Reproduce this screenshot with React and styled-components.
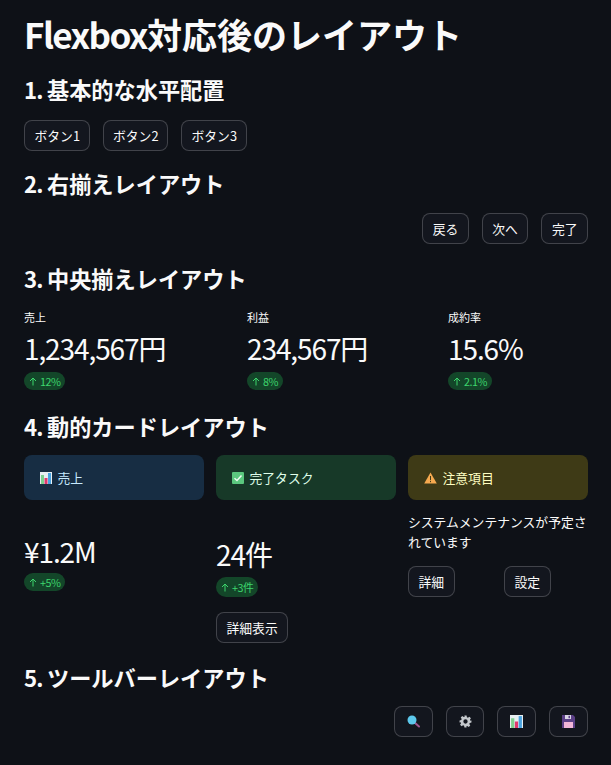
import React from "react";
import styled, { createGlobalStyle } from "styled-components";

const GlobalStyle = createGlobalStyle`
  html, body {
    margin: 0;
    padding: 0;
    background: #0e1117;
  }
  body {
    font-family: "Noto Sans CJK JP", "Noto Sans", sans-serif;
    color: #fafafa;
  }
`;

const Page = styled.div`
  width: 564px;
  height: 765px;
  padding: 0 23px 0 24px;
  overflow: hidden;
`;

const Title = styled.h1`
  margin: 0;
  padding-top: 11px;
  font-size: 35px;
  line-height: 45px;
  font-weight: 700;
`;

// latin glyphs run a bit wider than in the original font
const Latin = styled.span`
  letter-spacing: ${(p) => p.$spacing}px;
`;

const Heading = styled.h2`
  margin: ${(p) => p.$top}px 0 0;
  font-size: 22.2px;
  line-height: 30px;
  font-weight: 700;
`;

const ButtonRow = styled.div`
  display: flex;
  gap: 13px;
  margin-top: ${(p) => p.$top || 14}px;
  justify-content: ${(p) => (p.$end ? "flex-end" : "flex-start")};
`;

const Button = styled.button`
  box-sizing: border-box;
  height: 31px;
  padding: 0 ${(p) => p.$pad ?? 9.5}px;
  border: 1px solid rgba(250, 250, 250, 0.2);
  border-radius: 8px;
  background: #13161e;
  color: #fafafa;
  font-family: inherit;
  font-size: 12.8px;
  line-height: 29px;
  display: inline-flex;
  align-items: center;
  justify-content: center;
`;

const Metrics = styled.div`
  display: grid;
  grid-template-columns: 223px 201px 1fr;
  margin-top: 16px;
`;

const MetricLabel = styled.div`
  font-size: 11px;
  line-height: 16px;
  color: #fafafa;
`;

const MetricValue = styled.div`
  font-size: 28px;
  line-height: 42px;
  letter-spacing: -1.1px;
  margin-top: ${(p) => p.$top || 2}px;
`;

const Delta = styled.span`
  display: inline-flex;
  align-items: center;
  gap: 3px;
  height: ${(p) => (p.$tall ? 20 : 18)}px;
  margin-top: ${(p) => p.$top ?? 3}px;
  padding: 0 5px;
  border-radius: 10px;
  background: rgba(33, 195, 84, 0.3);
  color: #3dd56d;
  font-size: 10.8px;
  letter-spacing: -0.5px;
  line-height: 18px;
`;

const Cards = styled.div`
  display: grid;
  grid-template-columns: repeat(3, 180px);
  gap: 12px;
  margin-top: 14px;
`;

const Column = styled.div`
  display: flex;
  flex-direction: column;
  align-items: flex-start;
`;

const tones = {
  blue: { bg: "#172d43", fg: "#c7ebff" },
  green: { bg: "#173928", fg: "#dffde9" },
  yellow: { bg: "#3e3a16", fg: "#ffffc2" },
};

const Notice = styled.div`
  box-sizing: border-box;
  width: 100%;
  height: 45px;
  padding: 0 16px;
  border-radius: 8px;
  display: flex;
  align-items: center;
  gap: 5.5px;
  font-size: 12.8px;
  background: ${(p) => tones[p.$tone].bg};
  color: ${(p) => tones[p.$tone].fg};
`;

const BodyText = styled.p`
  margin: 12px 0 0;
  font-size: 12.8px;
  line-height: 20px;
`;

const SplitButtons = styled.div`
  display: grid;
  grid-template-columns: 84px 84px;
  gap: 12px;
  margin-top: 14px;
  justify-items: start;
`;

const ChartIcon = ({ size = 12 }) => (
  <svg width={size} height={size} viewBox="0 0 12 12">
    <rect width="12" height="12" fill="#e8eef2" />
    <rect x="1" y="3" width="3" height="9" fill="#7fd08f" />
    <rect x="4.5" y="6" width="3" height="6" fill="#e0386e" />
    <rect x="8" y="1" width="3" height="11" fill="#4aa3e0" />
  </svg>
);

const CheckIcon = () => (
  <svg width="12" height="12" viewBox="0 0 12 12">
    <rect width="12" height="12" rx="1" fill="#5bc77e" />
    <path d="M2.5 6.2 5 8.5 9.5 3.5" fill="none" stroke="#eefbf2" strokeWidth="1.5" />
  </svg>
);

const WarnIcon = () => (
  <svg width="13" height="12" viewBox="0 0 13 12">
    <path d="M6.5 0.5 12.8 11.5H0.2Z" fill="#f6a94f" />
    <rect x="6" y="4" width="1" height="4.2" fill="#3e3a16" />
    <rect x="6" y="9" width="1" height="1.2" fill="#3e3a16" />
  </svg>
);

const SearchIcon = () => (
  <svg width="13" height="13" viewBox="0 0 13 13">
    <path d="M7.5 7.5 12 11.5" stroke="#a0568e" strokeWidth="2" strokeLinecap="round" />
    <circle cx="5" cy="5" r="4.5" fill="#5cc8ec" />
  </svg>
);

const GearIcon = () => (
  <svg width="13" height="13" viewBox="0 0 24 24">
    <path
      fill="#c4c8cc"
      fillRule="evenodd"
      d="M10 1h4l.6 3.2 1.9.8 2.7-1.8 2.8 2.8-1.8 2.7.8 1.9L23 10v4l-3.2.6-.8 1.9 1.8 2.7-2.8 2.8-2.7-1.8-1.9.8L14 23h-4l-.6-3.2-1.9-.8-2.7 1.8-2.8-2.8 1.8-2.7-.8-1.9L1 14v-4l3.2-.6.8-1.9-1.8-2.7 2.8-2.8 2.7 1.8 1.9-.8zM12 8a4 4 0 1 0 0 8 4 4 0 0 0 0-8z"
    />
  </svg>
);

const SaveIcon = () => (
  <svg width="13" height="13" viewBox="0 0 13 13">
    <path d="M0 0H11L13 2V13H0Z" fill="#5b3f86" />
    <rect x="2" y="7" width="9" height="6" fill="#f2b6d8" />
    <rect x="3" y="0" width="6" height="4" fill="#d9d4e4" />
    <rect x="6.5" y="0.8" width="1.5" height="2.4" fill="#5b3f86" />
  </svg>
);

const deltaArrow = (
  <svg width="8" height="9" viewBox="0 0 8 9">
    <path d="M4 8.5V1M1 4 4 1l3 3" fill="none" stroke="#3dd56d" strokeWidth="1" />
  </svg>
);

const metrics = [
  { label: "売上", value: "1,234,567円", delta: "12%" },
  { label: "利益", value: "234,567円", delta: "8%" },
  { label: "成約率", value: "15.6%", delta: "2.1%" },
];

export default function App() {
  return (
    <Page>
      <GlobalStyle />
      <Title>
        <Latin $spacing={-1.6}>Flexbox</Latin>対応後のレイアウト
      </Title>

      <Heading $top={18}>
        <Latin $spacing={-0.8}>1. </Latin>基本的な水平配置
      </Heading>
      <ButtonRow $top={16}>
        {[1, 2, 3].map((n) => (
          <Button key={n}>
            ボタン<Latin $spacing={-1}>{n}</Latin>
          </Button>
        ))}
      </ButtonRow>

      <Heading $top={17}>
        <Latin $spacing={-0.8}>2. </Latin>右揃えレイアウト
      </Heading>
      <ButtonRow $top={15} $end>
        <Button>戻る</Button>
        <Button>次へ</Button>
        <Button>完了</Button>
      </ButtonRow>

      <Heading $top={19}>
        <Latin $spacing={-0.8}>3. </Latin>中央揃えレイアウト
      </Heading>
      <Metrics>
        {metrics.map((m) => (
          <Column key={m.label}>
            <MetricLabel>{m.label}</MetricLabel>
            <MetricValue>{m.value}</MetricValue>
            <Delta>
              {deltaArrow}
              {m.delta}
            </Delta>
          </Column>
        ))}
      </Metrics>

      <Heading $top={21}>
        <Latin $spacing={-0.8}>4. </Latin>動的カードレイアウト
      </Heading>
      <Cards>
        <Column>
          <Notice $tone="blue">
            <ChartIcon />
            売上
          </Notice>
          <MetricValue $top={30}>¥1.2M</MetricValue>
          <Delta $top={1}>{deltaArrow}+5%</Delta>
        </Column>
        <Column>
          <Notice $tone="green">
            <CheckIcon />
            完了タスク
          </Notice>
          <MetricValue $top={33}>24件</MetricValue>
          <Delta $tall $top={2}>
            {deltaArrow}+3件
          </Delta>
          <ButtonRow $top={15}>
            <Button>詳細表示</Button>
          </ButtonRow>
        </Column>
        <Column>
          <Notice $tone="yellow">
            <WarnIcon />
            注意項目
          </Notice>
          <BodyText>システムメンテナンスが予定されています</BodyText>
          <SplitButtons>
            <Button>詳細</Button>
            <Button>設定</Button>
          </SplitButtons>
        </Column>
      </Cards>

      <Heading $top={19}>
        <Latin $spacing={-0.8}>5. </Latin>ツールバーレイアウト
      </Heading>
      <ButtonRow $end>
        <Button $pad={12}>
          <SearchIcon />
        </Button>
        <Button $pad={11.5}>
          <GearIcon />
        </Button>
        <Button $pad={12}>
          <ChartIcon size={13} />
        </Button>
        <Button $pad={12}>
          <SaveIcon />
        </Button>
      </ButtonRow>
    </Page>
  );
}
